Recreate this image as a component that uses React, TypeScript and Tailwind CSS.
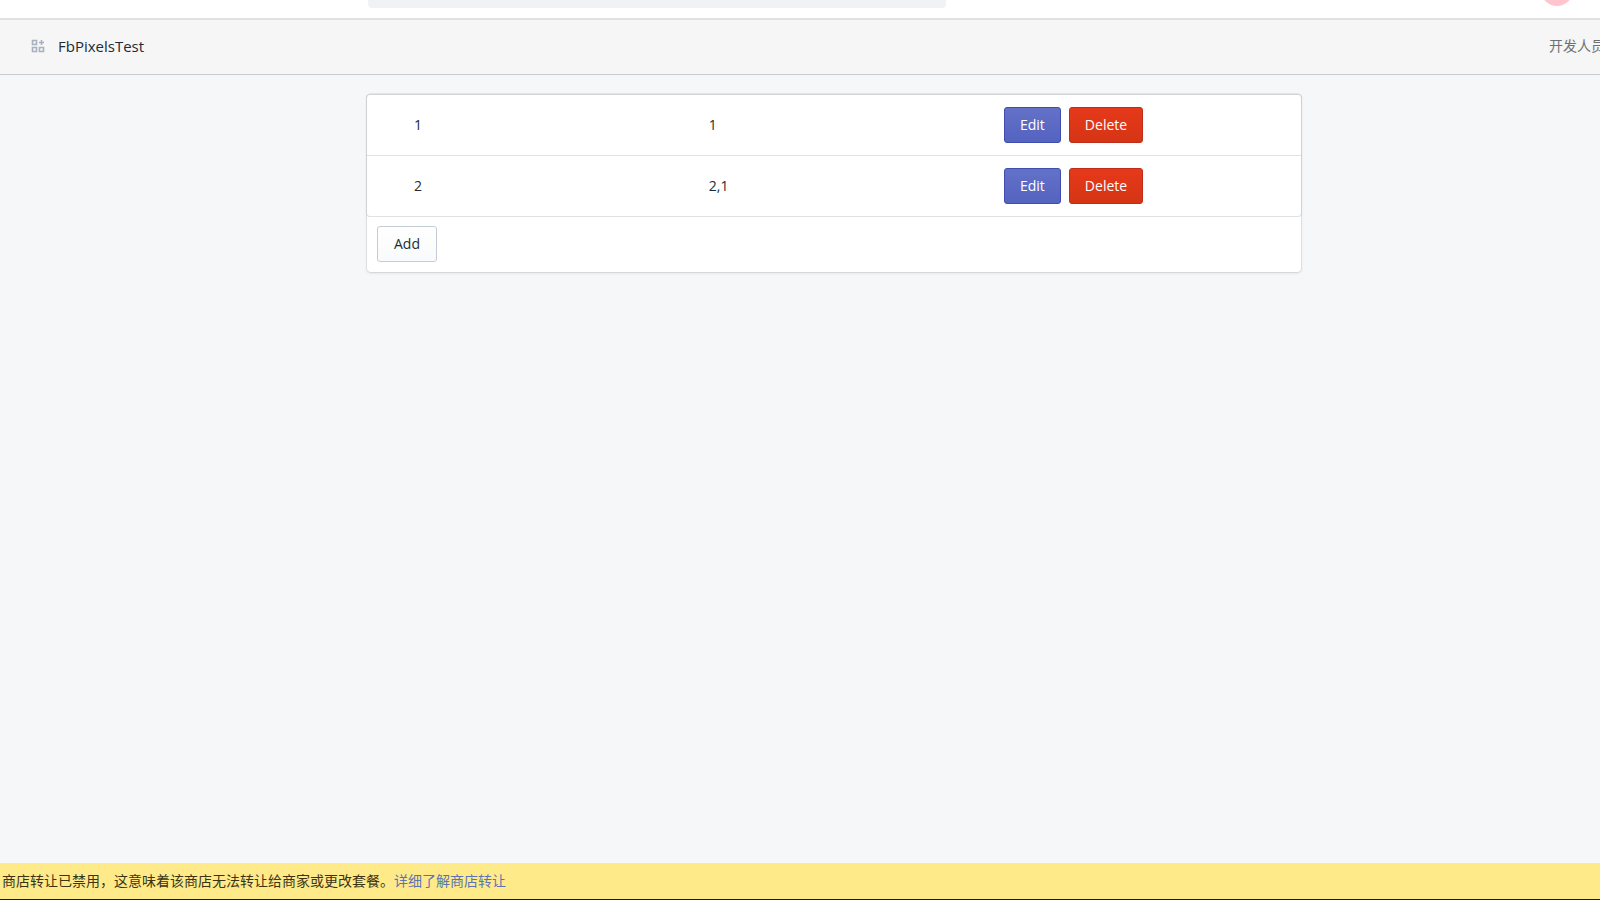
import { useState } from 'react'

interface Pixel {
  id: number
  value: string
}

const initialPixels: Pixel[] = [
  { id: 1, value: '1' },
  { id: 2, value: '2,1' },
]

function AppsIcon() {
  return (
    <svg width="14" height="14" viewBox="0 0 14 14" fill="none" stroke="#a9b1bf" strokeWidth="1.6" aria-hidden="true">
      <path d="M1.5 1.5h4v4h-4zM1.5 8.5h4v4h-4zM8.5 8.5h4v4h-4z" />
      <path d="M10.5 1v5M8 3.5h5" />
    </svg>
  )
}

export default function App() {
  const [pixels, setPixels] = useState<Pixel[]>(initialPixels)

  const handleDelete = (id: number) => {
    setPixels(pixels.filter(p => p.id !== id))
  }

  const handleAdd = () => {
    const id = Math.max(0, ...pixels.map(p => p.id)) + 1
    setPixels([...pixels, { id, value: String(id) }])
  }

  return (
    <div className="min-h-screen flex flex-col overflow-hidden bg-[#f5f7f9] text-sm text-[#212b36] font-['Open_Sans','Noto_Sans_CJK_SC',sans-serif]">
      {/* 顶部栏 */}
      <header className="h-5 flex items-start justify-between bg-white border-b-2 border-[#e0e0e0] pl-[368px] pr-[27px] overflow-hidden">
        <div className="h-2 w-[578px] rounded-b bg-[#f1f2f4]" />
        <div className="w-8 h-8 shrink-0 -mt-[26px] rounded-full bg-[#ffc4cd]" />
      </header>

      {/* 应用标题 */}
      <div className="h-[55px] flex items-center justify-between bg-[#f6f6f6] border-b border-[#c9cccf] pl-[31px] pb-[2px] overflow-hidden">
        <div className="flex items-center gap-[13px]">
          <AppsIcon />
          <h1 className="text-[15px] leading-5">FbPixelsTest</h1>
        </div>
        <span className="-mr-[5px] shrink-0 whitespace-nowrap text-[#6d7175]">开发人员</span>
      </div>

      <main className="flex-1 pt-[19px] pl-[367px] pr-[299px]">
        <div className="rounded bg-white shadow-[0_0_0_1px_rgba(63,63,68,0.08),0_1px_3px_0_rgba(63,63,68,0.15)]">
          <div className="-mx-px rounded border border-t-[#d3d6d9] border-x-[#cfd2d5] border-b-[#dfe1e4] overflow-hidden">
            <table className="w-full table-fixed">
              <tbody>
                {pixels.map(pixel => (
                  <tr key={pixel.id} className="border-b border-[#dfe3e8] last:border-b-0">
                    <td className="w-[36.6%] py-3 pl-[47px]">{pixel.id}</td>
                    <td className="w-[31.6%] py-3">{pixel.value}</td>
                    <td className="py-3">
                      <div className="flex gap-2">
                        <button
                          type="button"
                          className="h-9 px-[15px] rounded-[3px] border border-[#3f4eae] bg-gradient-to-b from-[#6371c7] to-[#5563c1] text-white"
                        >
                          Edit
                        </button>
                        <button
                          type="button"
                          onClick={() => handleDelete(pixel.id)}
                          className="h-9 px-[15px] rounded-[3px] border border-[#bf2d1a] bg-gradient-to-b from-[#e6391a] to-[#d53515] text-white"
                        >
                          Delete
                        </button>
                      </div>
                    </td>
                  </tr>
                ))}
              </tbody>
            </table>
          </div>
          <div className="px-[10px] pt-[9px] pb-[10px]">
            <button
              type="button"
              onClick={handleAdd}
              className="h-9 px-4 rounded-[3px] border border-[#c4cdd5] bg-gradient-to-b from-white to-[#f9fafb]"
            >
              Add
            </button>
          </div>
        </div>
      </main>

      {/* 底部提示 */}
      <footer className="h-[37px] flex items-center bg-[#ffea8a] border-b border-[#1f1a0a] pl-[2px] text-[#3b3413]">
        <p>
          商店转让已禁用，这意味着该商店无法转让给商家或更改套餐。
          <a href="#transfer" className="text-[#5c74b4]">详细了解商店转让</a>
        </p>
      </footer>
    </div>
  )
}
